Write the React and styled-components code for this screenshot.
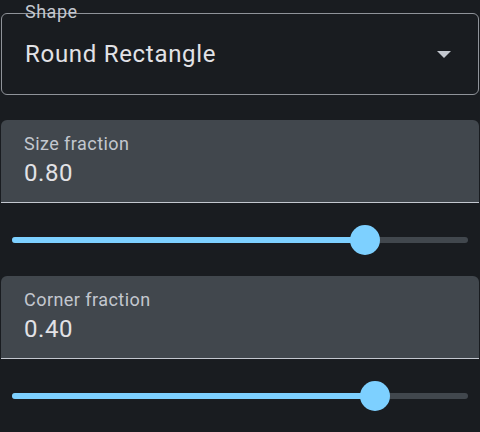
import React from 'react'
import styled, { createGlobalStyle } from 'styled-components'

const GlobalStyle = createGlobalStyle`
  html, body {
    margin: 0;
    padding: 0;
    background: #191c20;
  }
  body {
    font-family: Roboto, "Noto Sans", sans-serif;
  }
`

const Page = styled.div`
  width: 480px;
  height: 432px;
  background: #191c20;
  display: flex;
  flex-direction: column;
  padding-top: 13px;
  box-sizing: border-box;
  overflow: hidden;
`

const Outlined = styled.div`
  position: relative;
  margin: 0 1px;
  height: 82px;
  box-sizing: border-box;
  border: 1.5px solid #8f9399;
  border-radius: 6px;
  display: flex;
  align-items: center;
  padding: 0 20px 0 23px;
`

const FloatLabel = styled.span`
  position: absolute;
  left: 23px;
  top: -14px;
  font-size: 18px;
  line-height: 24px;
  color: #c3c7cf;
  letter-spacing: 0.5px;
`

const SelectText = styled.span`
  flex: 1;
  font-size: 24px;
  line-height: 32px;
  color: #e2e2e6;
  letter-spacing: 0.7px;
`

const Caret = styled.span`
  width: 0;
  height: 0;
  border-left: 7px solid transparent;
  border-right: 7px solid transparent;
  border-top: 7px solid #c3c7cf;
  margin-right: 7px;
  margin-top: 1px;
`

const Filled = styled.div`
  margin: ${p => p.$top}px 1px 0;
  height: 83px;
  box-sizing: border-box;
  background: #41474d;
  border-radius: 6px 6px 0 0;
  border-bottom: 1.5px solid #c3c7cf;
  padding: 12px 23px 0;
  display: flex;
  flex-direction: column;
`

const FieldLabel = styled.span`
  font-size: 18px;
  line-height: 24px;
  color: #c3c7cf;
  letter-spacing: 0.45px;
`

const FieldValue = styled.span`
  margin-top: 1px;
  font-size: 24px;
  line-height: 32px;
  color: #e2e2e6;
  letter-spacing: 0.6px;
`

const SliderRow = styled.div`
  height: 73px;
  display: flex;
  align-items: center;
  padding: 0 12px;
`

const Track = styled.div`
  position: relative;
  flex: 1;
  height: 6px;
  border-radius: 3px;
  background: #41474d;
`

const Active = styled.div`
  height: 100%;
  border-radius: 3px;
  background: #7dd0ff;
`

const Thumb = styled.div`
  position: absolute;
  top: 50%;
  width: 30px;
  height: 30px;
  margin: -15px 0 0 -15px;
  border-radius: 50%;
  background: #7dd0ff;
`

const Slider = ({ pos }) => (
  <SliderRow>
    <Track>
      <Active style={{ width: pos + 'px' }} />
      <Thumb style={{ left: pos + 'px' }} />
    </Track>
  </SliderRow>
)

const App = () => (
  <>
    <GlobalStyle />
    <Page>
      <Outlined>
        <FloatLabel>Shape</FloatLabel>
        <SelectText>Round Rectangle</SelectText>
        <Caret />
      </Outlined>
      <Filled $top={25}>
        <FieldLabel>Size fraction</FieldLabel>
        <FieldValue>0.80</FieldValue>
      </Filled>
      <Slider pos={353} />
      <Filled $top={0}>
        <FieldLabel>Corner fraction</FieldLabel>
        <FieldValue>0.40</FieldValue>
      </Filled>
      <Slider pos={363} />
    </Page>
  </>
)

export default App
